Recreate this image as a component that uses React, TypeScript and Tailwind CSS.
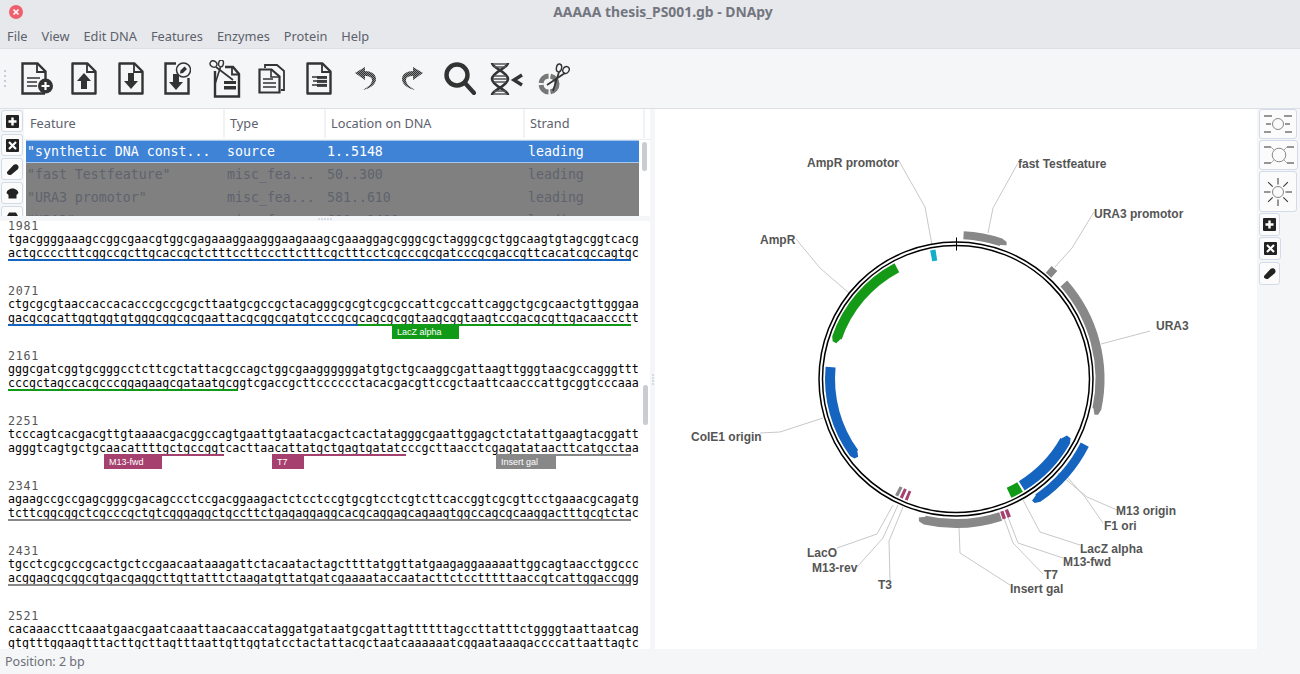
import type { ReactNode } from "react";

const mono = "font-['DejaVu_Sans_Mono',monospace]";
const ink = "#333333";

const polar = (a: number, r: number) => {
  const t = ((a - 90) * Math.PI) / 180;
  return `${(956 + r * Math.cos(t)).toFixed(2)} ${(379 + r * Math.sin(t)).toFixed(2)}`;
};

// annular piece from angle a to angle b, pointed at b when tip is set
function arcPath(a: number, b: number, r0: number, r1: number, tip = false) {
  const dir = b > a ? 1 : -1;
  const sweep = dir > 0 ? 1 : 0;
  const back = dir > 0 ? 0 : 1;
  const end = tip ? b - dir * 2.5 : b;
  const large = Math.abs(end - a) > 180 ? 1 : 0;
  const head = tip ? `L${polar(b - dir * 0.4, r1 - 2)} L${polar(b, (r0 + r1) / 2 - 1)} L${polar(end, r0 + 1)} ` : "";
  return `M${polar(a, r1)} A${r1} ${r1} 0 ${large} ${sweep} ${polar(end, r1)} ${head}L${polar(end, r0)} A${r0} ${r0} 0 ${large} ${back} ${polar(a, r0)} Z`;
}

const features = [
  { a: 3, b: 20.7, r0: 140, r1: 148, c: "#888888", tip: true },
  { a: 40.2, b: 43.2, r0: 139, r1: 148, c: "#888888" },
  { a: 48.5, b: 104.5, r0: 139.5, r1: 148.5, c: "#888888", tip: true },
  { a: 148.4, b: 117, r0: 120, r1: 131, c: "#1565c0", tip: true },
  { a: 117, b: 148, r0: 140, r1: 149, c: "#1565c0", tip: true },
  { a: 149.3, b: 155, r0: 120, r1: 131, c: "#119a17" },
  { a: 332, b: 286.6, r0: 121, r1: 131, c: "#159a17", tip: true },
  { a: 348.6, b: 351, r0: 120, r1: 131, c: "#14aecb" },
  { a: 275.4, b: 231.5, r0: 121, r1: 131, c: "#1565c0", tip: true },
  { a: 206.2, b: 207.7, r0: 121, r1: 131, c: "#888888" },
  { a: 204, b: 205.4, r0: 121, r1: 131, c: "#a5406f" },
  { a: 201.7, b: 203, r0: 121, r1: 131, c: "#a5406f" },
  { a: 162, b: 195, r0: 140, r1: 149, c: "#888888", tip: true },
  { a: 160.2, b: 161.6, r0: 140, r1: 148, c: "#a5406f" },
  { a: 158.2, b: 159.6, r0: 140, r1: 148, c: "#a5406f" },
];

const labels = [
  { t: "AmpR promotor", x: 807, y: 167, line: "899,161 925,207 932,245" },
  { t: "fast Testfeature", x: 1018, y: 168, line: "1018,163 993,208 988,233" },
  { t: "URA3 promotor", x: 1094, y: 218, line: "1094,212 1072,248 1055,267" },
  { t: "AmpR", x: 760, y: 244, line: "796,239 820,268 849,293" },
  { t: "URA3", x: 1156, y: 330, line: "1150,331 1101,344" },
  { t: "ColE1 origin", x: 691, y: 441, line: "760,433 780,432 823,418" },
  { t: "M13 origin", x: 1116, y: 515, line: "1117,510 1087,497 1058,473" },
  { t: "F1 ori", x: 1104, y: 530, line: "1103,523 1085,497 1067,477" },
  { t: "LacZ alpha", x: 1080, y: 553, line: "1080,545 1040,532 1023,500" },
  { t: "M13-fwd", x: 1063, y: 566, line: "1063,558 1018,543 1008,517" },
  { t: "T7", x: 1044, y: 579, line: "1043,574 1013,543 1004,518" },
  { t: "Insert gal", x: 1010, y: 593, line: "1010,585 960,553 959,527" },
  { t: "LacO", x: 807, y: 557, line: "837,548 877,534 893,505" },
  { t: "M13-rev", x: 812, y: 572, line: "857,567 883,538 898,505" },
  { t: "T3", x: 878, y: 589, line: "890,580 889,541 903,507" },
];

const blocks = [
  { n: 1981, top: "tgacggggaaagccggcgaacgtggcgagaaaggaagggaagaaagcgaaaggagcgggcgctagggcgctggcaagtgtagcggtcacg", marks: [{ x: 8, w: 623, c: "#1565c0" }], tags: [] },
  { n: 2071, top: "ctgcgcgtaaccaccacacccgccgcgcttaatgcgccgctacagggcgcgtcgcgccattcgccattcaggctgcgcaactgttgggaa", marks: [{ x: 8, w: 350, c: "#1565c0" }, { x: 358, w: 273, c: "#119a17" }], tags: [{ x: 392, w: 67, c: "#119a17", t: "LacZ alpha" }] },
  { n: 2161, top: "gggcgatcggtgcgggcctcttcgctattacgccagctggcgaaggggggatgtgctgcaaggcgattaagttgggtaacgccagggttt", marks: [{ x: 8, w: 230, c: "#119a17" }], tags: [] },
  {
    n: 2251,
    top: "tcccagtcacgacgttgtaaaacgacggccagtgaattgtaatacgactcactatagggcgaattggagctctatattgaagtacggatt",
    marks: [{ x: 104, w: 120, c: "#a5406f" }, { x: 272, w: 134, c: "#a5406f" }, { x: 496, w: 135, c: "#888888" }],
    tags: [{ x: 104, w: 58, c: "#a5406f", t: "M13-fwd" }, { x: 272, w: 32, c: "#a5406f", t: "T7" }, { x: 496, w: 60, c: "#888888", t: "Insert gal" }],
  },
  { n: 2341, top: "agaagccgccgagcgggcgacagccctccgacggaagactctcctccgtgcgtcctcgtcttcaccggtcgcgttcctgaaacgcagatg", marks: [{ x: 8, w: 623, c: "#888888" }], tags: [] },
  { n: 2431, top: "tgcctcgcgccgcactgctccgaacaataaagattctacaatactagcttttatggttatgaagaggaaaaattggcagtaacctggccc", marks: [{ x: 8, w: 623, c: "#888888" }], tags: [] },
  { n: 2521, top: "cacaaaccttcaaatgaacgaatcaaattaacaaccataggatgataatgcgattagttttttagccttatttctggggtaattaatcag", marks: [], tags: [] },
];

const rows = [
  ['"fast Testfeature"', "misc_fea...", "50..300", "leading"],
  ['"URA3 promotor"', "misc_fea...", "581..610", "leading"],
  ['"URA3"', "misc_fea...", "680..1480", "leading"],
];

const complement = (s: string) =>
  s.replace(/[acgt]/g, (c) => ({ a: "t", c: "g", g: "c", t: "a" })[c] as string);

function Doc({ children, w = 26, h = 33 }: { children?: ReactNode; w?: number; h?: number }) {
  return (
    <svg width={w} height={h} viewBox={`0 0 ${w} ${h}`} fill="none">
      <path d="M1.5 1.5H16.5L24.5 9.5V31.5H1.5Z" stroke={ink} strokeWidth="2.4" strokeLinejoin="round" />
      <path d="M16 2V10H24" stroke={ink} strokeWidth="1.8" />
      {children}
    </svg>
  );
}

function Scissors({ x = 0, y = 0 }: { x?: number; y?: number }) {
  return (
    <g transform={`translate(${x} ${y})`} fill="none" stroke={ink}>
      <ellipse cx="4.5" cy="4" rx="3.5" ry="3" strokeWidth="1.4" transform="rotate(30 4.5 4)" />
      <ellipse cx="12" cy="3.5" rx="2.4" ry="3.4" strokeWidth="1.4" transform="rotate(10 12 3.5)" />
      <path d="M7 7L24 20" strokeWidth="1.6" />
      <path d="M11.5 7L6 24" strokeWidth="1.6" />
    </g>
  );
}

function Checker({ id }: { id: string }) {
  return (
    <pattern id={id} width="2" height="2" patternUnits="userSpaceOnUse">
      <rect width="2" height="2" fill="#8a8a8a" />
      <rect width="1" height="1" fill="#333" />
      <rect x="1" y="1" width="1" height="1" fill="#333" />
    </pattern>
  );
}

const toolbar: ReactNode[] = [
  <svg key="new" width="32" height="33" viewBox="0 0 32 33" fill="none">
    <path d="M24.5 17V9.5L16.5 1.5H1.5V31.5H24" stroke={ink} strokeWidth="2.4" />
    <path d="M16 2V10H24" stroke={ink} strokeWidth="1.8" />
    <path d="M6 16H19M6 20H16M6 24H16" stroke={ink} strokeWidth="1.4" />
    <circle cx="24.5" cy="24" r="7.5" fill={ink} />
    <path d="M24.5 20V28M20.5 24H28.5" stroke="#fff" strokeWidth="2.2" />
  </svg>,
  <Doc key="open">
    <path d="M13 11L20 19H16V27H10V19H6Z" fill={ink} />
  </Doc>,
  <Doc key="save">
    <path d="M13 27L6 19H10V11H16V19H20Z" fill={ink} />
  </Doc>,
  <svg key="saveas" width="27" height="33" viewBox="0 0 27 33" fill="none">
    <path d="M12 1.5H1.5V31.5H24.5V16" stroke={ink} strokeWidth="2.4" />
    <path d="M12 28L5 20H9V12H15V20H19Z" fill={ink} />
    <circle cx="19.5" cy="8" r="7" fill="#f5f6f7" stroke={ink} strokeWidth="1.5" />
    <path d="M16 11.5L16.5 8.5L20.5 4.5L23 7L19 11Z" fill={ink} />
  </svg>,
  <svg key="cut" width="32" height="38" viewBox="0 0 32 38" fill="none">
    <path d="M6 11V36.5H30V14L24 7H16" stroke={ink} strokeWidth="2.4" />
    <path d="M23 7.5V14.5H30" stroke={ink} strokeWidth="1.8" />
    <rect x="15" y="21" width="12" height="3" fill={ink} />
    <rect x="15" y="26" width="12" height="3.5" fill={ink} />
    <Scissors x={0} y={0} />
  </svg>,
  <svg key="copy" width="28" height="30" viewBox="0 0 28 30" fill="none">
    <path d="M7 4V1H19L26 7V26H23" stroke={ink} strokeWidth="1.8" />
    <path d="M1.5 5.5H13.5L21.5 12.5V28.5H1.5Z" stroke={ink} strokeWidth="2.2" fill="#f5f6f7" />
    <path d="M13 6V13H21" stroke={ink} strokeWidth="1.6" />
    <path d="M5 15H15M5 19H18M5 23H18" stroke={ink} strokeWidth="1.4" />
  </svg>,
  <Doc key="paste">
    <path d="M6 15H21M7 19H21M6 23H21" stroke={ink} strokeWidth="1.6" />
    <rect x="11" y="14" width="10" height="11" fill={ink} opacity="0.85" />
    <path d="M11 17.5H21M11 21.5H21" stroke="#f5f6f7" strokeWidth="0.9" />
  </Doc>,
  <svg key="undo" width="23" height="24" viewBox="0 0 23 24">
    <defs><Checker id="hatch-undo" /></defs>
    <path d="M1 6L11 0V4C17 4 22 7 22 12C22 17 17 21 9 23C14 20 18 17 18 13C18 10 15 9 11 9V13Z" fill="url(#hatch-undo)" />
  </svg>,
  <svg key="redo" width="23" height="24" viewBox="0 0 23 24">
    <defs><Checker id="hatch-redo" /></defs>
    <path d="M22 6L12 0V4C6 4 1 7 1 12C1 17 6 21 14 23C9 20 5 17 5 13C5 10 8 9 12 9V13Z" fill="url(#hatch-redo)" />
  </svg>,
  <svg key="find" width="32" height="33" viewBox="0 0 32 33" fill="none">
    <circle cx="13" cy="13" r="10.5" stroke={ink} strokeWidth="4.4" />
    <path d="M21 21L30 31" stroke={ink} strokeWidth="4.2" strokeLinecap="round" />
  </svg>,
  <svg key="dna" width="33" height="34" viewBox="0 0 33 34" fill="none">
    <path d="M2 1C2 6 18 10 18 17C18 24 2 28 2 33M18 1C18 6 2 10 2 17C2 24 18 28 18 33" stroke={ink} strokeWidth="2.6" />
    <path d="M3 2H17M4 5H16M4 14H16M3 17H17M4 20H16M4 29H16M3 32H17" stroke="#555" strokeWidth="1.4" />
    <path d="M32 13L24 18L32 23" stroke={ink} strokeWidth="3.4" />
  </svg>,
  <svg key="digest" width="32" height="32" viewBox="0 0 32 32" fill="none">
    <circle cx="11" cy="21" r="8" stroke="#777" strokeWidth="5" strokeDasharray="11 2" />
    <ellipse cx="21" cy="5" rx="2.6" ry="4" stroke={ink} strokeWidth="1.4" transform="rotate(10 21 5)" />
    <ellipse cx="28" cy="7" rx="3" ry="3.6" stroke={ink} strokeWidth="1.4" transform="rotate(30 28 7)" />
    <path d="M21 9L15 28M27 10L9 22" stroke={ink} strokeWidth="1.7" />
  </svg>,
];

function PlusIcon() {
  return (
    <svg width="13" height="13" viewBox="0 0 13 13">
      <rect width="13" height="13" rx="1" fill="#222" />
      <path d="M6.5 2.5V10.5M2.5 6.5H10.5" stroke="#fff" strokeWidth="2.4" />
    </svg>
  );
}

function CrossIcon() {
  return (
    <svg width="13" height="13" viewBox="0 0 13 13">
      <rect width="13" height="13" rx="1" fill="#222" />
      <path d="M3 3L10 10M10 3L3 10" stroke="#fff" strokeWidth="2.2" />
    </svg>
  );
}

function EraserIcon() {
  return (
    <svg width="13" height="13" viewBox="0 0 13 13">
      <path d="M1.5 8.5L7.5 2C9 0.8 11 1 12 2.5C13 4 12.6 5.5 11.5 6.5L5.5 11.5C4 12.6 2.5 12 1.5 11C0.7 10.2 0.8 9.2 1.5 8.5Z" fill="#222" />
    </svg>
  );
}

function HatIcon({ flat = false }: { flat?: boolean }) {
  return (
    <svg width="13" height="11" viewBox="0 0 13 11">
      <path d={flat ? "M3 0.5H10L12.5 5L10.5 7V10.5H2.5V7L0.5 5Z" : "M0.5 5C1 2 4 0.5 6.5 0.5C9 0.5 12 2 12.5 5L10.5 7V10.5H2.5V7Z"} fill="#222" />
    </svg>
  );
}

function SideButton({ className, children }: { className: string; children: ReactNode }) {
  return (
    <div className={`flex items-center justify-center rounded-[3px] border border-[#d3dae8] bg-[#fbfbfc] ${className}`}>
      {children}
    </div>
  );
}

function ViewIcon({ kind }: { kind: number }) {
  const dark = "#333";
  if (kind === 2) {
    const spokes = [0, 45, 90, 135, 180, 225, 270, 315];
    return (
      <svg width="30" height="30" viewBox="0 0 30 30" fill="none">
        <circle cx="15" cy="15" r="5.5" stroke="#888" strokeWidth="1" />
        {spokes.map((a) => (
          <path key={a} d="M15 1V7.5" stroke={dark} strokeWidth="1" transform={`rotate(${a} 15 15)`} />
        ))}
      </svg>
    );
  }
  if (kind === 1) {
    return (
      <svg width="32" height="24" viewBox="0 0 32 24" fill="none">
        <circle cx="16" cy="12" r="6.8" stroke="#888" strokeWidth="1" />
        <path d="M1 4H8M24 4H31M1 20H8M24 20H31" stroke={dark} strokeWidth="1.1" />
        <path d="M8 4L11 7M24 4L21 7M8 20L11 17M24 20L21 17" stroke="#999" strokeWidth="0.8" />
      </svg>
    );
  }
  return (
    <svg width="30" height="22" viewBox="0 0 30 22" fill="none">
      <circle cx="15" cy="11" r="5.5" stroke="#888" strokeWidth="1" />
      <path d="M1 3H9M21 3H29M3 11H8M22 11H27M1 19H8M22 19H29" stroke={dark} strokeWidth="1" />
    </svg>
  );
}

function Plasmid() {
  return (
    <svg width="602" height="540" viewBox="655 109 602 540" fill="none">
      {labels.map((l) => (
        <polyline key={l.t} points={l.line} stroke="#c8c8c8" strokeWidth="1" />
      ))}
      <circle cx="956" cy="379" r="137" stroke="#000" strokeWidth="1.5" />
      <circle cx="956" cy="379" r="133.5" stroke="#000" strokeWidth="1.5" />
      <path d="M956.5 237.5V250.5" stroke="#000" strokeWidth="1" />
      {features.map((f) => (
        <path key={`${f.a}-${f.b}`} d={arcPath(f.a, f.b, f.r0, f.r1, f.tip)} fill={f.c} />
      ))}
      {labels.map((l) => (
        <text key={l.t} x={l.x} y={l.y} fill="#555555" fontSize="12" fontWeight="700" fontFamily="'Liberation Sans', sans-serif">
          {l.t}
        </text>
      ))}
    </svg>
  );
}

function SequenceBlock({ block }: { block: (typeof blocks)[number] }) {
  return (
    <div className={`relative h-[65px] shrink-0 pl-2 text-[11.65px] leading-[14px] text-black ${mono}`}>
      <div className="h-[14px] translate-y-[1px] tracking-[0.75px] text-[#555]">{block.n}</div>
      <div className="whitespace-pre">{block.top}</div>
      <div className="whitespace-pre">{complement(block.top)}</div>
      {block.marks.map((m) => (
        <div key={m.x} className="absolute top-[41px] h-[2px]" style={{ left: m.x, width: m.w, background: m.c }} />
      ))}
      {block.tags.map((t) => (
        <div
          key={t.x}
          className="absolute top-[42px] flex h-[14px] items-center pl-[5px] font-['Liberation_Sans',sans-serif] text-[9px] text-white"
          style={{ left: t.x, width: t.w, background: t.c }}
        >
          {t.t}
        </div>
      ))}
    </div>
  );
}

export default function App() {
  return (
    <div className="flex h-[674px] w-[1300px] flex-col overflow-hidden bg-[#f5f6f7] font-['Noto_Sans',sans-serif] text-[#5c616c]">
      <div className="relative flex h-[25px] shrink-0 items-center justify-center bg-[#e7e8eb] pl-[26px]">
        <div className="absolute left-[9px] top-[5px] flex h-[14px] w-[14px] items-center justify-center rounded-full bg-[#ef5f6d]">
          <svg width="8" height="8" viewBox="0 0 8 8">
            <path d="M1.5 1.5L6.5 6.5M6.5 1.5L1.5 6.5" stroke="#fff" strokeWidth="1.6" />
          </svg>
        </div>
        <span className="text-[13.9px] font-bold text-[#737680]">AAAAA thesis_PS001.gb - DNApy</span>
      </div>

      <div className="flex h-[24px] shrink-0 items-center gap-[14px] border-b border-[#dcdfe3] bg-[#e7e8eb] pl-[7px] text-[12.8px]">
        {["File", "View", "Edit DNA", "Features", "Enzymes", "Protein", "Help"].map((m) => (
          <span key={m}>{m}</span>
        ))}
      </div>

      <div className="flex h-[60px] shrink-0 items-center border-b border-[#dcdfe3] pl-[3px]">
        <div className="flex h-[18px] w-[10px] flex-col justify-between pl-[1px]">
          <i className="h-[2px] w-[2px] bg-[#c5ccdb]" />
          <i className="h-[2px] w-[2px] bg-[#c5ccdb]" />
          <i className="h-[2px] w-[2px] bg-[#c5ccdb]" />
          <i className="h-[2px] w-[2px] bg-[#c5ccdb]" />
        </div>
        {toolbar.map((icon, i) => (
          <div key={i} className="flex h-[40px] w-[47px] items-center justify-center">
            {icon}
          </div>
        ))}
      </div>

      <div className="flex h-[540px] shrink-0">
        <div className="flex w-[650px] flex-col">
          <div className="flex h-[107px] shrink-0">
            <div className="flex w-[24px] shrink-0 flex-col gap-[2px] overflow-hidden pl-[1px] pt-[1px]">
              <SideButton className="h-[22px] w-[22px] shrink-0"><PlusIcon /></SideButton>
              <SideButton className="h-[22px] w-[22px] shrink-0"><CrossIcon /></SideButton>
              <SideButton className="h-[22px] w-[22px] shrink-0"><EraserIcon /></SideButton>
              <SideButton className="h-[22px] w-[22px] shrink-0"><HatIcon /></SideButton>
              <SideButton className="h-[22px] w-[22px] shrink-0"><HatIcon flat /></SideButton>
            </div>
            <div className="relative flex-1 overflow-hidden bg-white">
              <div className="flex h-[31px] border-b border-[#eeeff1] pb-[1px] text-[12.75px]">
                <div className="flex w-[201px] items-center border-r-2 border-[#f1f2f4] pl-[6px]">Feature</div>
                <div className="flex w-[101px] items-center border-r-2 border-[#f1f2f4] pl-[5px]">Type</div>
                <div className="flex w-[199px] items-center border-r-2 border-[#f1f2f4] pl-[5px]">Location on DNA</div>
                <div className="flex w-[120px] items-center border-r-2 border-[#f1f2f4] pl-[5px]">Strand</div>
              </div>
              <div className={`ml-[2px] w-[613px] text-[13.25px] ${mono}`}>
                <div className="flex h-[23px] items-center border-y border-[#a9c8ee] bg-[#3f83d6] text-white">
                  <span className="w-[201px] pl-[1px]">"synthetic DNA const...</span>
                  <span className="w-[100px]">source</span>
                  <span className="w-[201px]">1..5148</span>
                  <span>leading</span>
                </div>
                <div className="bg-[#808080] text-[#5f636d]">
                  {rows.map((r) => (
                    <div key={r[0]} className="flex h-[23px] items-center">
                      <span className="w-[201px] pl-[1px]">{r[0]}</span>
                      <span className="w-[100px]">{r[1]}</span>
                      <span className="w-[201px]">{r[2]}</span>
                      <span>{r[3]}</span>
                    </div>
                  ))}
                </div>
              </div>
              <div className="absolute left-[618px] top-[33px] h-[29px] w-[5px] rounded-full bg-[#c9ccd1]" />
            </div>
          </div>

          <div className="flex h-[5px] shrink-0 items-center justify-center gap-[1px]">
            {[0, 1, 2, 3, 4].map((i) => (
              <i key={i} className="h-[2px] w-[2px] bg-[#d5dbe7]" />
            ))}
          </div>

          <div className="relative flex-1 overflow-hidden bg-white">
            <div className="mt-[-3px] flex flex-col">
              {blocks.map((b) => (
                <SequenceBlock key={b.n} block={b} />
              ))}
            </div>
            <div className="absolute left-[643px] top-[164px] h-[40px] w-[5px] rounded-full bg-[#c9ccd1]" />
          </div>
        </div>

        <div className="flex w-[5px] shrink-0 flex-col items-center justify-center gap-[1px]">
          {[0, 1, 2, 3].map((i) => (
            <i key={i} className="h-[2px] w-[2px] bg-[#d5dbe7]" />
          ))}
        </div>

        <div className="w-[602px] shrink-0 bg-white">
          <Plasmid />
        </div>

        <div className="flex flex-1 flex-col items-start pl-[2px]">
          <SideButton className="h-[30px] w-[38px]"><ViewIcon kind={0} /></SideButton>
          <SideButton className="mt-[1px] h-[30px] w-[39px]"><ViewIcon kind={1} /></SideButton>
          <SideButton className="mt-[1px] h-[41px] w-[38px]"><ViewIcon kind={2} /></SideButton>
          <SideButton className="mt-[1px] h-[23px] w-[21px]"><PlusIcon /></SideButton>
          <SideButton className="mt-[1px] h-[23px] w-[22px]"><CrossIcon /></SideButton>
          <SideButton className="mt-[2px] h-[23px] w-[21px]"><EraserIcon /></SideButton>
        </div>
      </div>

      <div className="flex flex-1 items-center pl-[5px] pt-[2px] text-[12.5px] text-[#6b6f78]">Position: 2 bp</div>
    </div>
  );
}
